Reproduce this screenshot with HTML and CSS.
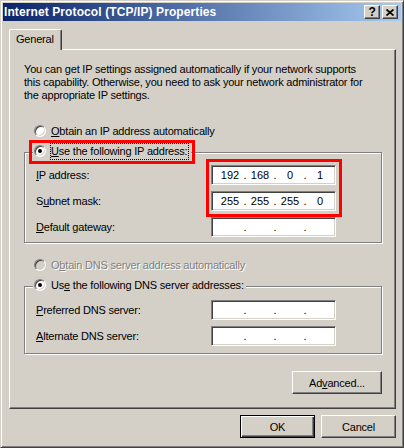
FILE: index.html
```html
<!DOCTYPE html>
<html lang="en">
<head>
  <meta charset="UTF-8" />
  <meta name="viewport" content="width=device-width, initial-scale=1.0"/>
  <title>Internet Protocol (TCP/IP) Properties</title>
  <link rel="stylesheet" href="styles.css">
</head>
<body>
  <div class="window">
    <div class="titlebar">
      <span class="title">Internet Protocol (TCP/IP) Properties</span>
      <span class="cap-btn">?</span>
      <span class="cap-btn cap-close">
        <svg width="8" height="7" viewBox="0 0 8 7"><path d="M0.5 0.5L7.5 6.5M7.5 0.5L0.5 6.5" stroke="#000" stroke-width="1.7"/></svg>
      </span>
    </div>

    <div class="client">
      <div class="tab">General</div>

      <div class="page">
        <p class="intro">
          You can get IP settings assigned automatically if your network supports<br>
          this capability. Otherwise, you need to ask your network administrator for<br>
          the appropriate IP settings.
        </p>

        <div class="radio-row">
          <span class="radio"></span>
          <span class="radio-label"><u>O</u>btain an IP address automatically</span>
        </div>

        <div class="group">
          <div class="legend">
            <span class="radio checked"></span>
            <span class="focus"><u>U</u>se the following IP address:</span>
          </div>
          <div class="fields">
            <span><u>I</u>P address:</span>
            <div class="ip"><span>192</span><span>.</span><span>168</span><span>.</span><span>0</span><span>.</span><span>1</span></div>
            <span>S<u>u</u>bnet mask:</span>
            <div class="ip"><span>255</span><span>.</span><span>255</span><span>.</span><span>255</span><span>.</span><span>0</span></div>
            <span><u>D</u>efault gateway:</span>
            <div class="ip"><span></span><span>.</span><span></span><span>.</span><span></span><span>.</span><span></span></div>
          </div>
        </div>

        <div class="radio-row radio-row-dns">
          <span class="radio disabled"></span>
          <span class="radio-label disabled-text">O<u>b</u>tain DNS server address automatically</span>
        </div>

        <div class="group group-dns">
          <div class="legend">
            <span class="radio checked"></span>
            <span class="radio-label">Us<u>e</u> the following DNS server addresses:</span>
          </div>
          <div class="fields">
            <span><u>P</u>referred DNS server:</span>
            <div class="ip"><span></span><span>.</span><span></span><span>.</span><span></span><span>.</span><span></span></div>
            <span><u>A</u>lternate DNS server:</span>
            <div class="ip"><span></span><span>.</span><span></span><span>.</span><span></span><span>.</span><span></span></div>
          </div>
        </div>

        <div class="advanced-row">
          <button type="button" class="btn btn-advanced">Ad<u>v</u>anced...</button>
        </div>
      </div>

      <div class="buttons">
        <button type="button" class="btn btn-dialog btn-default">OK</button>
        <button type="button" class="btn btn-dialog">Cancel</button>
      </div>
    </div>

    <!-- red highlight marks -->
    <div class="mark mark-choice"></div>
    <div class="mark mark-fields"></div>
  </div>
</body>
</html>
```

FILE: styles.css
```css
:root {
  --face: #d4d0c8;
  --shadow: #808080;
  --dark: #404040;
  --light: #ffffff;
  --mark: #ff0000;
}

body {
  margin: 0;
  font-family: "Liberation Sans", Arial, sans-serif;
  font-size: 11px;
  letter-spacing: -0.2px;
  color: #000;
  background-color: var(--face);
}

.window {
  position: relative;
  width: 404px;
  height: 448px;
  box-sizing: border-box;
  padding: 2px;
  border: 1px solid;
  border-color: var(--face) var(--dark) var(--dark) var(--face);
  box-shadow: inset 1px 1px var(--light), inset -1px -1px var(--shadow);
  background-color: var(--face);
}

/* title bar */
.titlebar {
  display: flex;
  align-items: center;
  height: 18px;
  padding: 0 3px 0 1px;
  background: linear-gradient(to right, #0a246a, #a6caf0);
}

.title {
  flex: 1;
  color: #fff;
  font-weight: bold;
  font-size: 12px;
  letter-spacing: 0.1px;
}

.cap-btn {
  display: flex;
  align-items: center;
  justify-content: center;
  width: 16px;
  height: 14px;
  box-sizing: border-box;
  border: 1px solid;
  border-color: var(--light) var(--dark) var(--dark) var(--light);
  box-shadow: inset -1px -1px var(--shadow);
  background-color: var(--face);
  font-weight: bold;
  font-size: 12px;
  line-height: 12px;
}

.cap-close {
  margin-left: 2px;
}

/* client area */
.client {
  padding: 0 5px 0 6px;
}

.tab {
  position: relative;
  z-index: 1;
  width: 53px;
  height: 21px;
  box-sizing: border-box;
  margin: 8px 0 -1px;
  padding-left: 6px;
  border: 1px solid;
  border-bottom: 0;
  border-color: var(--light) var(--dark) var(--light) var(--light);
  border-radius: 2px 2px 0 0;
  box-shadow: inset -1px 0 var(--shadow);
  background-color: var(--face);
  line-height: 18px;
}

.page {
  height: 360px;
  box-sizing: border-box;
  border: 1px solid;
  border-color: var(--light) var(--dark) var(--dark) var(--light);
  box-shadow: inset -1px -1px var(--shadow);
}

.intro {
  margin: 13px 0 0 14px;
  line-height: 13px;
}

/* radio buttons */
.radio-row {
  display: flex;
  align-items: center;
  height: 16px;
  margin: 21px 0 0 24px;
}

.radio-row-dns {
  margin-top: 14px;
}

.radio {
  position: relative;
  flex-shrink: 0;
  width: 12px;
  height: 12px;
  box-sizing: border-box;
  border: 1px solid;
  border-color: var(--shadow) var(--light) var(--light) var(--shadow);
  border-radius: 50%;
  box-shadow: inset 1px 1px var(--dark), inset -1px -1px var(--face);
  background-color: #fff;
}

.radio.checked::after {
  content: "";
  position: absolute;
  left: 3px;
  top: 3px;
  width: 4px;
  height: 4px;
  border-radius: 50%;
  background-color: #000;
}

.radio.disabled {
  background-color: var(--face);
}

.radio-label {
  margin-left: 5px;
}

.disabled-text {
  color: var(--shadow);
  text-shadow: 1px 1px var(--light);
}

.focus {
  margin-left: 4px;
  padding: 1px 1px 1px 0;
  border: 1px dotted #000;
  line-height: 13px;
}

/* group boxes */
.group {
  margin: 13px 13px 0 14px;
  padding: 0 0 5px 11px;
  border: 1px solid var(--shadow);
  box-shadow: inset 1px 1px var(--light), 1px 1px var(--light);
}

.group-dns {
  padding-bottom: 7px;
}

.legend {
  display: flex;
  align-items: center;
  width: max-content;
  height: 16px;
  margin: -10px 0 0 -3px;
  padding: 0 2px 0 1px;
  background-color: var(--face);
}

.fields {
  display: grid;
  grid-template-columns: 175px 125px;
  grid-auto-rows: 20px;
  row-gap: 6px;
  align-items: center;
  margin-top: 6px;
}

.group-dns .fields {
  margin-top: 7px;
}

.ip {
  display: grid;
  grid-template-columns: 24px 6px 24px 6px 24px 6px 24px;
  align-items: center;
  height: 20px;
  box-sizing: border-box;
  padding-left: 6px;
  border: 1px solid;
  border-color: var(--shadow) var(--light) var(--light) var(--shadow);
  box-shadow: inset 1px 1px var(--dark), inset -1px -1px var(--face);
  background-color: #fff;
  text-align: center;
  letter-spacing: 0;
  line-height: 18px;
}

/* push buttons */
.btn {
  height: 23px;
  box-sizing: border-box;
  padding: 0;
  border: 1px solid;
  border-color: var(--light) var(--dark) var(--dark) var(--light);
  box-shadow: inset -1px -1px var(--shadow), inset 1px 1px var(--face);
  background-color: var(--face);
  font: inherit;
  letter-spacing: inherit;
  color: #000;
}

.btn-default {
  border-color: #000;
  box-shadow: inset 1px 1px var(--light), inset -1px -1px var(--dark), inset -2px -2px var(--shadow);
}

.advanced-row {
  display: flex;
  justify-content: flex-end;
  margin: 17px 13px 0 0;
}

.btn-advanced {
  width: 90px;
}

.buttons {
  display: flex;
  justify-content: flex-end;
  gap: 6px;
  margin-top: 6px;
}

.btn-dialog {
  width: 75px;
}

/* red highlight marks drawn over the dialog */
.mark {
  position: absolute;
  box-sizing: border-box;
  border: 3px solid var(--mark);
}

.mark-choice {
  left: 28px;
  top: 139px;
  width: 166px;
  height: 24px;
}

.mark-fields {
  left: 205px;
  top: 158px;
  width: 136px;
  height: 58px;
}
```
